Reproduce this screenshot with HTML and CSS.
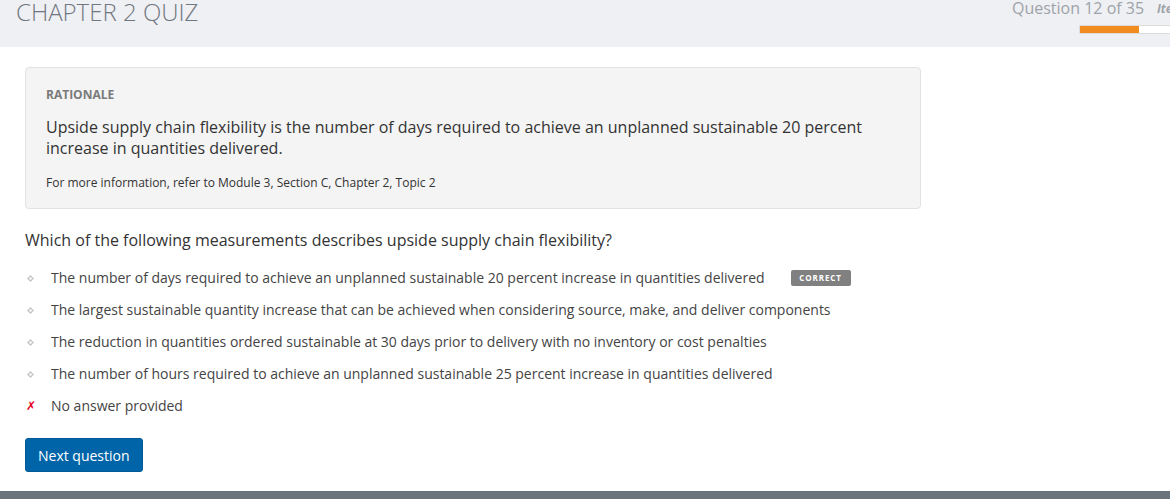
FILE: index.html
```html
<!DOCTYPE html>
<html>
<head>
<meta charset="utf-8">
<link rel="stylesheet" href="styles.css">
</head>
<body>
<header class="topbar">
  <h1 class="quiz-title">CHAPTER 2 QUIZ</h1>
  <div class="status">
    <div class="progress-col">
      <div class="progress-text">Question 12 of 35</div>
      <div class="progress-bar"><div class="progress-fill" style="width: 59px"></div></div>
    </div>
    <div class="item-label">Item</div>
  </div>
</header>
<main class="content">
  <section class="rationale">
    <div class="rationale-label">RATIONALE</div>
    <p class="rationale-text">Upside supply chain flexibility is the number of days required to achieve an unplanned sustainable 20 percent increase in quantities delivered.</p>
    <p class="rationale-ref">For more information, refer to Module 3, Section C, Chapter 2, Topic 2</p>
  </section>
  <h2 class="question">Which of the following measurements describes upside supply chain flexibility?</h2>
  <ul class="options">
    <li class="option">
      <span class="mark"><svg width="7" height="7" viewBox="0 0 7 7"><path d="M3.5 0.8 L6.2 3.5 L3.5 6.2 L0.8 3.5 Z" fill="#f2f2f2" stroke="#c4c4c4" stroke-width="1.1"/></svg></span>
      <span class="opt-text">The number of days required to achieve an unplanned sustainable 20 percent increase in quantities delivered</span>
      <span class="badge">CORRECT</span>
    </li>
    <li class="option">
      <span class="mark"><svg width="7" height="7" viewBox="0 0 7 7"><path d="M3.5 0.8 L6.2 3.5 L3.5 6.2 L0.8 3.5 Z" fill="#f2f2f2" stroke="#c4c4c4" stroke-width="1.1"/></svg></span>
      <span class="opt-text">The largest sustainable quantity increase that can be achieved when considering source, make, and deliver components</span>
    </li>
    <li class="option">
      <span class="mark"><svg width="7" height="7" viewBox="0 0 7 7"><path d="M3.5 0.8 L6.2 3.5 L3.5 6.2 L0.8 3.5 Z" fill="#f2f2f2" stroke="#c4c4c4" stroke-width="1.1"/></svg></span>
      <span class="opt-text">The reduction in quantities ordered sustainable at 30 days prior to delivery with no inventory or cost penalties</span>
    </li>
    <li class="option">
      <span class="mark"><svg width="7" height="7" viewBox="0 0 7 7"><path d="M3.5 0.8 L6.2 3.5 L3.5 6.2 L0.8 3.5 Z" fill="#f2f2f2" stroke="#c4c4c4" stroke-width="1.1"/></svg></span>
      <span class="opt-text">The number of hours required to achieve an unplanned sustainable 25 percent increase in quantities delivered</span>
    </li>
    <li class="option">
      <span class="mark mark-wrong">✗</span>
      <span class="opt-text">No answer provided</span>
    </li>
  </ul>
  <button class="next-btn" type="button">Next question</button>
</main>
<footer class="footer"></footer>
</body>
</html>
```

FILE: styles.css
```css
html, body {
  margin: 0;
  padding: 0;
}
body {
  font-family: "Open Sans", "Liberation Sans", sans-serif;
  color: #333;
  background: #fff;
  width: 1170px;
  height: 499px;
  overflow: hidden;
}
.topbar {
  height: 47px;
  background: #eff0f4;
  display: flex;
  justify-content: space-between;
  align-items: flex-start;
  overflow: hidden;
  white-space: nowrap;
}
.quiz-title {
  margin: 0;
  padding-left: 16px;
  font-size: 24px;
  line-height: 24px;
  font-weight: 300;
  color: #6f7780;
}
.status {
  width: 158px;
  min-width: 0;
  display: flex;
  overflow: hidden;
}
.progress-col {
  flex: 0 0 145px;
  min-width: 0;
  display: flex;
  flex-direction: column;
}
.progress-text {
  font-size: 16px;
  line-height: 16px;
  color: #9ea3a9;
}
.progress-bar {
  margin-top: 9px;
  margin-left: 67px;
  width: 110px;
  height: 7px;
  background: #fff;
  border: 1px solid #dcdcdc;
  border-radius: 1px;
  flex: 0 0 auto;
}
.progress-fill {
  height: 100%;
  background: #f28c1e;
}
.item-label {
  flex: 0 0 auto;
  font-size: 12px;
  line-height: 16px;
  font-weight: 700;
  font-style: italic;
  color: #9ea3a9;
  padding-top: 1px;
}
.content {
  padding: 20px 25px 0;
}
.rationale {
  width: 854px;
  background: #f4f4f4;
  border: 1px solid #e2e2e2;
  border-radius: 4px;
  padding: 18px 20px 17px;
}
.rationale-label {
  font-size: 12px;
  line-height: 17px;
  font-weight: 700;
  color: #7a7a7a;
}
.rationale-text {
  margin: 14px 0 0;
  font-size: 16px;
  line-height: 21px;
  color: #333;
}
.rationale-ref {
  margin: 15px 0 0;
  font-size: 12px;
  line-height: 17px;
  color: #333;
}
.question {
  margin: 20px 0 11px;
  font-size: 16px;
  line-height: 22px;
  font-weight: 400;
  color: #333;
}
.options {
  list-style: none;
  margin: 0;
  padding: 0;
}
.option {
  height: 32px;
  display: flex;
  align-items: center;
  font-size: 14px;
  line-height: 20px;
  color: #444;
}
.mark {
  width: 26px;
  flex: 0 0 26px;
  display: flex;
  align-items: center;
  padding-left: 2px;
  box-sizing: border-box;
}
.mark-wrong {
  color: #e3001b;
  font-family: "DejaVu Sans", sans-serif;
  font-size: 12px;
  font-weight: 700;
  padding-left: 1px;
}
.badge {
  margin-left: 26px;
  width: 60px;
  height: 16px;
  background: #808080;
  border-radius: 2px;
  color: #fff;
  font-size: 8px;
  font-weight: 700;
  letter-spacing: 0.9px;
  display: flex;
  align-items: center;
  justify-content: center;
  line-height: 16px;
}
.next-btn {
  margin-top: 16px;
  display: block;
  height: 34px;
  padding: 0 12px;
  background: #0064a8;
  border: 1px solid #005a97;
  border-radius: 3px;
  color: #fff;
  font-family: "Open Sans", "Liberation Sans", sans-serif;
  font-size: 14px;
  font-weight: 500;
}
.footer {
  margin-top: 19px;
  height: 10px;
  background: #6b747b;
}
```
